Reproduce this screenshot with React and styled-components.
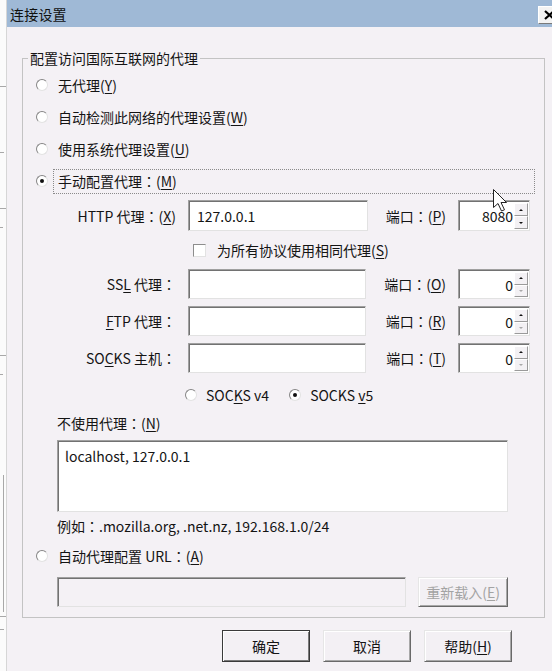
import React from "react";
import styled, { createGlobalStyle } from "styled-components";

const GlobalStyle = createGlobalStyle`
  html, body {
    margin: 0;
    padding: 0;
  }
  body {
    width: 552px;
    height: 671px;
    overflow: hidden;
    background: #f4f1f5;
    font-family: "Noto Sans CJK SC", "Noto Sans", sans-serif;
    font-size: 14px;
    color: #141414;
  }
  u {
    text-underline-offset: 2px;
  }
`;

const Screen = styled.div`
  position: relative;
  display: flex;
  width: 552px;
  height: 671px;
  overflow: hidden;
`;

/* sliver of the window behind the dialog */
const BackWindow = styled.div`
  width: 6px;
  flex: none;
  background: #fbfbfb;
  border-right: 1px solid #d6d6d6;
  display: flex;
  flex-direction: column;
`;

const StripMark = styled.div`
  flex: none;
  margin-top: ${(p) => p.$gap}px;
  height: ${(p) => p.$h || 1}px;
  width: ${(p) => p.$w || 6}px;
  margin-left: ${(p) => p.$x || 0}px;
  background: #a8a8a8;
`;

const Dialog = styled.div`
  flex: 1;
  min-width: 0;
  display: flex;
  flex-direction: column;
  background: #f4f1f5;
`;

const TitleBar = styled.div`
  height: 27px;
  flex: none;
  display: flex;
  align-items: center;
  padding-left: 3px;
  background: #9fb9d6;
`;

const Title = styled.span`
  font-size: 14px;
  color: #101010;
  letter-spacing: 0.2px;
`;

const CloseButton = styled.div`
  margin-left: auto;
  margin-right: -9px;
  margin-top: 3px;
  width: 23px;
  height: 18px;
  box-sizing: border-box;
  display: flex;
  align-items: center;
  justify-content: center;
  background: #f3f3f3;
  border: 1px solid;
  border-color: #ffffff #7a7a7a #7a7a7a #ffffff;
`;

const Body = styled.div`
  flex: 1;
  display: flex;
  flex-direction: column;
  padding: 22px 7px 0 15px;
`;

const Group = styled.fieldset`
  margin: 0;
  padding: 2px 9px 10px 5px;
  border: 1px solid #c3c3c3;
  min-width: 0;
`;

const Legend = styled.legend`
  padding: 0 2px;
  line-height: 18px;
  font-size: 14px;
`;

const GroupContent = styled.div`
  display: flex;
  flex-direction: column;
  padding-left: 8px;
`;

/* full-width colon drawn centred, as the Windows UI font does */
const Colon = styled.span`
  font-family: "Noto Sans CJK TC", "Noto Sans CJK SC", sans-serif;
`;

const OptionRow = styled.label`
  display: flex;
  align-items: center;
  gap: 10px;
  height: 32px;
  white-space: nowrap;
`;

const RadioCircle = styled.span`
  width: 12px;
  height: 12px;
  flex: none;
  box-sizing: border-box;
  border-radius: 50%;
  background: #ffffff;
  border: 1px solid;
  border-color: #858585 #e2e2e2 #e2e2e2 #858585;
  display: flex;
  align-items: center;
  justify-content: center;

  &::after {
    content: "";
    display: ${(p) => (p.$checked ? "block" : "none")};
    width: 4px;
    height: 4px;
    border-radius: 50%;
    background: #111;
  }
`;

const FocusLabel = styled.span`
  flex: 1;
  height: 25px;
  box-sizing: border-box;
  display: flex;
  align-items: center;
  margin-left: -5px;
  padding-left: 4px;
  border: 1px dotted #8a8a8a;
`;

const ProxyGrid = styled.div`
  display: grid;
  grid-template-columns: 140px 180px 66px 72px;
  grid-template-rows: 31px 24px 30px 30px 30px 30px;
  column-gap: 12px;
  row-gap: 7px;
  align-items: center;
  margin-top: 3px;
`;

const FieldLabel = styled.span`
  justify-self: end;
  white-space: nowrap;
`;

const sunken = `
  box-sizing: border-box;
  border: 1px solid;
  border-color: #a0a0a0 #e2e2e2 #e2e2e2 #a0a0a0;
  box-shadow: inset 1px 1px 0 #727272;
`;

const TextField = styled.input`
  ${sunken}
  width: ${(p) => p.$w || "100%"};
  height: 100%;
  margin: 0;
  padding: 0 7px 0 8px;
  font: inherit;
  font-size: 14px;
  color: #141414;
  background: ${(p) => (p.disabled ? "#f4f1f5" : "#ffffff")};
  outline: none;
`;

const Spin = styled.div`
  ${sunken}
  height: 100%;
  display: flex;
  background: #ffffff;
  padding: 2px 1px 1px 2px;
`;

const SpinValue = styled.span`
  flex: 1;
  display: flex;
  align-items: center;
  justify-content: flex-end;
  padding-right: 1px;
`;

const SpinButtons = styled.div`
  width: 14px;
  display: flex;
  flex-direction: column;
`;

const SpinButton = styled.div`
  flex: 1;
  box-sizing: border-box;
  display: flex;
  align-items: center;
  justify-content: center;
  background: #f3f1f4;
  border: 1px solid;
  border-color: #ffffff #9a9a9a #9a9a9a #ffffff;
`;

const Arrow = styled.span`
  width: 0;
  height: 0;
  border-left: 2px solid transparent;
  border-right: 2px solid transparent;
  ${(p) =>
    p.$down
      ? `border-top: 2px solid ${p.$dim ? "#a8a8a8" : "#111"};`
      : `border-bottom: 2px solid #111;`}
`;

const CheckRow = styled.label`
  grid-column: 2 / 5;
  display: flex;
  align-items: center;
  gap: 11px;
  padding-left: 5px;
  white-space: nowrap;
`;

const CheckBox = styled.span`
  width: 13px;
  height: 13px;
  flex: none;
  box-sizing: border-box;
  background: #ffffff;
  border: 1px solid;
  border-color: #8d8d8d #e2e2e2 #e2e2e2 #8d8d8d;
`;

const VersionRow = styled.div`
  grid-column: 2 / 5;
  display: flex;
  align-items: center;
  margin-left: -3px;
  white-space: nowrap;
`;

const VersionOption = styled.label`
  display: flex;
  align-items: center;
  gap: 9px;
  margin-right: 20px;
`;

const LowerSection = styled.div`
  display: flex;
  flex-direction: column;
  padding-left: 21px;
`;

const PlainRow = styled.div`
  height: ${(p) => p.$h}px;
  display: flex;
  align-items: center;
  white-space: nowrap;
`;

const Exceptions = styled.div`
  ${sunken}
  width: 451px;
  height: 72px;
  margin-top: 4px;
  padding: 5px 7px;
  background: #ffffff;
  line-height: 20px;
`;

const UrlRow = styled.div`
  display: flex;
  gap: 12px;
  height: 30px;
  margin-top: 5px;
`;

const DialogButton = styled.button`
  width: ${(p) => p.$w || 88}px;
  height: ${(p) => p.$h || 32}px;
  margin: 0;
  padding: 0;
  font: inherit;
  font-size: 14px;
  color: ${(p) => (p.disabled ? "#a3a3a3" : "#141414")};
  background: #f3f0f4;
  box-sizing: border-box;
  border: 1px solid;
  border-color: ${(p) =>
    p.$default ? "#3a3a3a" : "#e6e6e6 #696969 #696969 #e6e6e6"};
  box-shadow: ${(p) =>
    p.$default
      ? "inset 1px 1px 0 #ffffff, inset -1px -1px 0 #7a7a7a"
      : "inset 1px 1px 0 #ffffff, inset -1px -1px 0 #a8a8a8"};
`;

const ButtonBar = styled.div`
  display: flex;
  justify-content: flex-end;
  gap: 13px;
  margin-top: 12px;
  padding-right: 33px;
`;

const Cursor = styled.svg`
  position: absolute;
  left: 492px;
  top: 188px;
`;

function Radio({ checked }) {
  return <RadioCircle $checked={checked} />;
}

function C() {
  return <Colon>：</Colon>;
}

function PortSpin({ value }) {
  const atMin = value === "0";
  return (
    <Spin>
      <SpinValue>{value}</SpinValue>
      <SpinButtons>
        <SpinButton>
          <Arrow />
        </SpinButton>
        <SpinButton>
          <Arrow $down $dim={atMin} />
        </SpinButton>
      </SpinButtons>
    </Spin>
  );
}

const proxies = [
  {
    label: (
      <>
        SS<u>L</u> 代理<C />
      </>
    ),
    key: "O",
  },
  {
    label: (
      <>
        <u>F</u>TP 代理<C />
      </>
    ),
    key: "R",
  },
  {
    label: (
      <>
        SO<u>C</u>KS 主机<C />
      </>
    ),
    key: "T",
  },
];

export default function App() {
  return (
    <Screen>
      <GlobalStyle />
      <BackWindow>
        <StripMark $gap={86} />
        <StripMark $gap={65} $w={4} />
        <StripMark $gap={55} />
        <StripMark $gap={18} $w={3} />
        <StripMark $gap={127} />
        <StripMark $gap={18} $w={3} />
        <StripMark $gap={100} $h={137} $w={1} $x={3} />
        <StripMark $gap={4} />
        <StripMark $gap={12} $w={4} />
      </BackWindow>

      <Dialog>
        <TitleBar>
          <Title>连接设置</Title>
          <CloseButton>
            <svg width="11" height="10" viewBox="0 0 11 10">
              <path d="M1 1 L10 9 M10 1 L1 9" stroke="#000" strokeWidth="2.2" />
            </svg>
          </CloseButton>
        </TitleBar>

        <Body>
          <Group>
            <Legend>配置访问国际互联网的代理</Legend>
            <GroupContent>
              <OptionRow>
                <Radio />
                <span>
                  无代理(<u>Y</u>)
                </span>
              </OptionRow>
              <OptionRow>
                <Radio />
                <span>
                  自动检测此网络的代理设置(<u>W</u>)
                </span>
              </OptionRow>
              <OptionRow>
                <Radio />
                <span>
                  使用系统代理设置(<u>U</u>)
                </span>
              </OptionRow>
              <OptionRow>
                <Radio checked />
                <FocusLabel>
                  手动配置代理<C />(<u>M</u>)
                </FocusLabel>
              </OptionRow>

              <ProxyGrid>
                <FieldLabel>
                  HTTP 代理<C />(<u>X</u>)
                </FieldLabel>
                <TextField readOnly defaultValue="127.0.0.1" />
                <FieldLabel>
                  端口<C />(<u>P</u>)
                </FieldLabel>
                <PortSpin value="8080" />

                <CheckRow>
                  <CheckBox />
                  <span>
                    为所有协议使用相同代理(<u>S</u>)
                  </span>
                </CheckRow>

                {proxies.map((p) => (
                  <React.Fragment key={p.key}>
                    <FieldLabel>{p.label}</FieldLabel>
                    <TextField readOnly defaultValue="" $w="178px" />
                    <FieldLabel>
                      端口<C />(<u>{p.key}</u>)
                    </FieldLabel>
                    <PortSpin value="0" />
                  </React.Fragment>
                ))}

                <VersionRow>
                  <VersionOption>
                    <Radio />
                    <span>
                      SOC<u>K</u>S v4
                    </span>
                  </VersionOption>
                  <VersionOption>
                    <Radio checked />
                    <span>
                      SOCKS <u>v</u>5
                    </span>
                  </VersionOption>
                </VersionRow>
              </ProxyGrid>

              <LowerSection>
                <PlainRow $h={26}>
                  <span>
                    不使用代理<C />(<u>N</u>)
                  </span>
                </PlainRow>
                <Exceptions>localhost, 127.0.0.1</Exceptions>
                <PlainRow $h={28}>
                  例如<C />.mozilla.org, .net.nz, 192.168.1.0/24
                </PlainRow>
              </LowerSection>

              <OptionRow>
                <Radio />
                <span>
                  自动代理配置 URL<C />(<u>A</u>)
                </span>
              </OptionRow>

              <LowerSection>
                <UrlRow>
                  <TextField disabled $w="349px" />
                  <DialogButton disabled $w={90} $h={30}>
                    重新载入(<u>E</u>)
                  </DialogButton>
                </UrlRow>
              </LowerSection>
            </GroupContent>
          </Group>

          <ButtonBar>
            <DialogButton $default>确定</DialogButton>
            <DialogButton>取消</DialogButton>
            <DialogButton>
              帮助(<u>H</u>)
            </DialogButton>
          </ButtonBar>
        </Body>
      </Dialog>

      <Cursor width="17" height="25" viewBox="0 0 17 25">
        <path
          d="M1.5 1.5 L1.5 19.5 L6 15.5 L9.5 23 L12.5 21.8 L9 14.5 L14.5 14.5 Z"
          fill="#ffffff"
          stroke="#222"
          strokeWidth="1"
          strokeLinejoin="round"
        />
      </Cursor>
    </Screen>
  );
}
